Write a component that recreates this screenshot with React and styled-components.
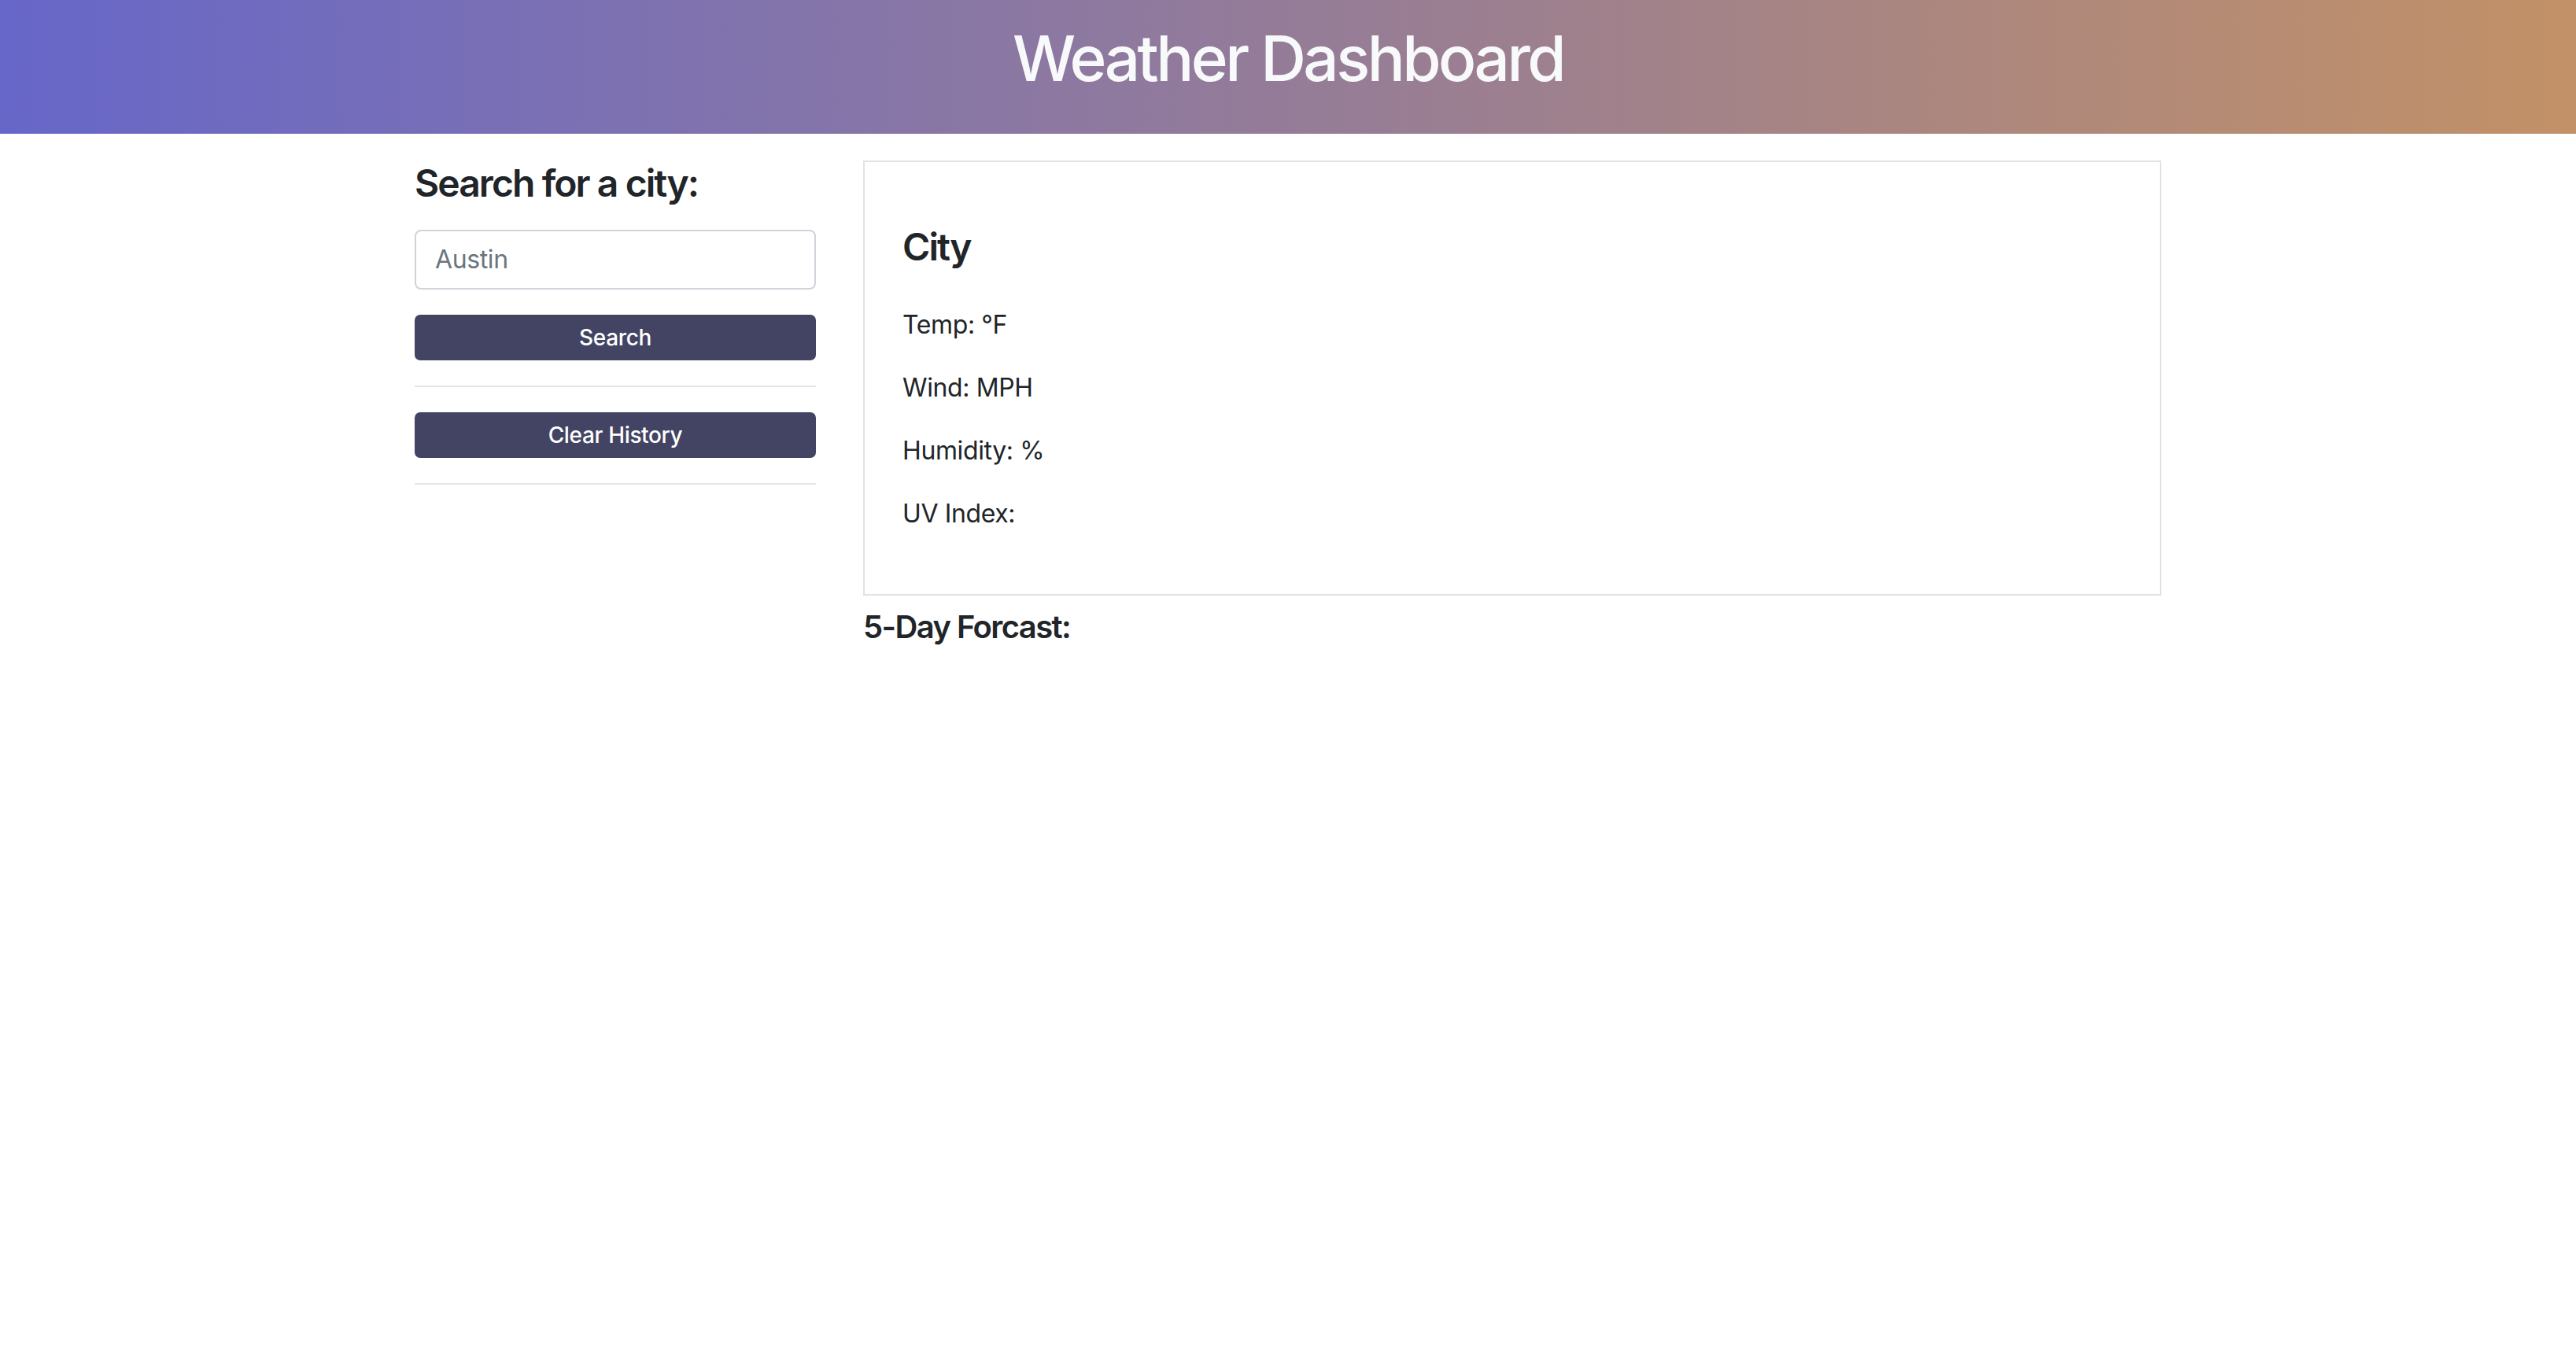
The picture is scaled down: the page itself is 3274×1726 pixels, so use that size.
import React from "react";
import styled, { createGlobalStyle } from "styled-components";

const GlobalStyle = createGlobalStyle`
  * {
    box-sizing: border-box;
  }
  body {
    margin: 0;
    background: #ffffff;
    color: #212529;
    font-family: Inter, "Noto Sans", "Liberation Sans", sans-serif;
    font-size: 32px;
    line-height: 1.5;
    letter-spacing: -0.012em;
  }
`;

function App() {
  const stats = ["Temp: °F", "Wind: MPH", "Humidity: %", "UV Index:"];

  return (
    <>
      <GlobalStyle />
      <Header>
        <h1 className="title">Weather Dashboard</h1>
      </Header>
      <Container>
        <Sidebar>
          <Heading>Search for a city:</Heading>
          <CityInput type="text" placeholder="Austin" />
          <Button>Search</Button>
          <Divider />
          <Button>Clear History</Button>
          <Divider />
        </Sidebar>
        <Main>
          <CurrentCard>
            <CardTitle>City</CardTitle>
            {stats.map((s) => (
              <Stat key={s}>{s}</Stat>
            ))}
          </CurrentCard>
          <ForecastTitle>5-Day Forcast:</ForecastTitle>
        </Main>
      </Container>
    </>
  );
}

const Header = styled.header`
  background: linear-gradient(to right, #6767c9, #c29167);
  padding: 26px 0 48px;
  text-align: center;
  .title {
    margin: 0;
    color: #f8f9fa;
    font-size: 80px;
    font-weight: 500;
    line-height: 1.2;
    letter-spacing: -0.045em;
  }
`;

const Container = styled.main`
  width: 2220px;
  margin: 0 auto;
  padding-top: 34px;
  display: flex;
  align-items: flex-start;
  gap: 60px;
`;

const Sidebar = styled.aside`
  flex: 0 0 510px;
  display: flex;
  flex-direction: column;
`;

const Heading = styled.h3`
  margin: 0 0 30px;
  font-size: 48px;
  font-weight: 600;
  line-height: 1.2;
  letter-spacing: -0.04em;
`;

const CityInput = styled.input`
  height: 76px;
  width: 100%;
  padding: 12px 24px;
  border: 2px solid #ced4da;
  border-radius: 8px;
  font-family: inherit;
  font-size: 32px;
  letter-spacing: -0.012em;
  color: #495057;
  margin-bottom: 32px;
  &::placeholder {
    color: #6c757d;
  }
`;

const Button = styled.button`
  width: 100%;
  height: 58px;
  border: none;
  border-radius: 7px;
  background: #434463;
  color: #ffffff;
  font-family: inherit;
  font-size: 28px;
  font-weight: 500;
  letter-spacing: -0.012em;
  line-height: 1.5;
  cursor: pointer;
`;

const Divider = styled.hr`
  margin: 32px 0;
  border: 0;
  border-top: 2px solid rgba(0, 0, 0, 0.1);
`;

const Main = styled.section`
  flex: 1;
  min-width: 0;
`;

const CurrentCard = styled.div`
  border: 2px solid #dfe2e6;
  padding: 79px 48px 46px;
  margin-bottom: 16px;
`;

const CardTitle = styled.h3`
  margin: 0 0 46px;
  font-size: 48px;
  font-weight: 600;
  line-height: 1.2;
  letter-spacing: -0.04em;
`;

const Stat = styled.p`
  margin: 0 0 32px;
  font-size: 32px;
  line-height: 48px;
`;

const ForecastTitle = styled.h5`
  margin: 0;
  font-size: 40px;
  font-weight: 600;
  line-height: 1.2;
  letter-spacing: -0.04em;
`;

export default App;
